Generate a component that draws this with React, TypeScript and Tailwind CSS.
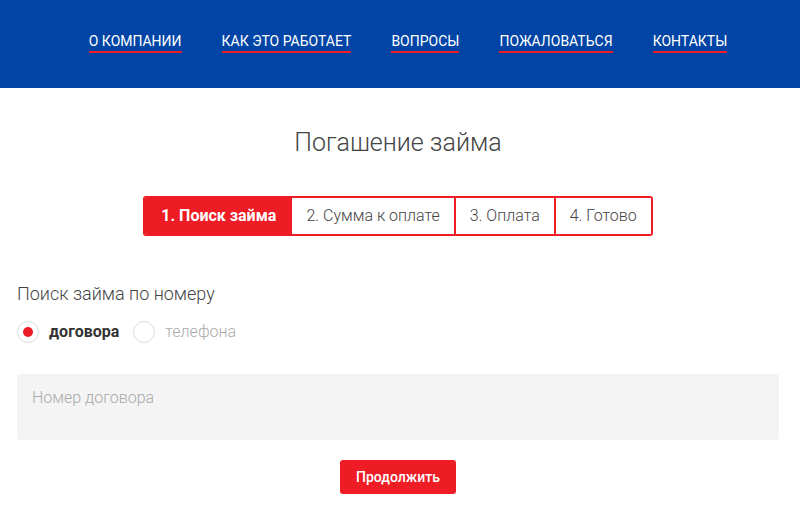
import React, { useState } from "react";

const navItems = ["О компании", "Как это работает", "Вопросы", "Пожаловаться", "Контакты"];
const steps = ["1. Поиск займа", "2. Сумма к оплате", "3. Оплата", "4. Готово"];

function Radio({ checked, label, onClick }: { checked: boolean; label: string; onClick: () => void }) {
  return (
    <label className="flex cursor-pointer items-center gap-[10px]" onClick={onClick}>
      <span className="flex h-[22px] w-[22px] items-center justify-center rounded-full border border-[#dcdcdc] bg-white">
        {checked && <span className="h-[10px] w-[10px] rounded-full bg-[#ee1c25]" />}
      </span>
      <span className={checked ? "text-[16px] font-bold text-[#333]" : "text-[16px] font-light text-[#aaa]"}>{label}</span>
    </label>
  );
}

export default function App() {
  const [mode, setMode] = useState<"contract" | "phone">("contract");

  return (
    <div className="min-h-screen bg-white font-['Roboto',sans-serif] text-[#444]">
      <header className="flex h-[88px] items-start justify-center bg-[#0044a5] pt-[33px] pl-[16px]">
        <nav className="flex gap-[40px]">
          {navItems.map((item) => (
            <a
              key={item}
              href="#"
              className="border-b-2 border-[#ee1c25] pb-[2px] text-[14px] leading-[16px] uppercase text-white"
            >
              {item}
            </a>
          ))}
        </nav>
      </header>

      <main className="pl-[17px] pr-[21px]">
        <h1 className="pt-[40px] text-center text-[25px] leading-[30px] font-light text-[#444]">Погашение займа</h1>

        <div className="mt-[38px] flex justify-center">
          <div className="flex h-[40px] overflow-hidden rounded-[3px] border-2 border-[#ee1c25]">
            {steps.map((step, i) => (
              <div
                key={step}
                className={
                  i === 0
                    ? "flex items-center bg-[#ee1c25] pl-[16px] pr-[14px] text-[16px] font-bold text-white"
                    : "flex items-center border-l-2 border-[#ee1c25] bg-white px-[14px] text-[16px] font-light text-[#444]"
                }
              >
                {step}
              </div>
            ))}
          </div>
        </div>

        <p className="mt-[46px] text-[18px] leading-[24px] font-light text-[#444]">Поиск займа по номеру</p>

        <div className="mt-[14px] flex gap-[14px]">
          <Radio checked={mode === "contract"} label="договора" onClick={() => setMode("contract")} />
          <Radio checked={mode === "phone"} label="телефона" onClick={() => setMode("phone")} />
        </div>

        <div className="mt-[30px] h-[66px] rounded-[3px] bg-[#f4f4f4] px-[15px] pt-[12px]">
          <input
            className="w-full bg-transparent text-[16px] font-light text-[#444] outline-none placeholder:text-[#aaa]"
            placeholder={mode === "contract" ? "Номер договора" : "Номер телефона"}
          />
        </div>

        <div className="mt-[20px] flex justify-center">
          <button className="h-[34px] rounded-[3px] bg-[#ee1c25] px-[16px] text-[14px] font-medium text-white">
            Продолжить
          </button>
        </div>
      </main>
    </div>
  );
}
